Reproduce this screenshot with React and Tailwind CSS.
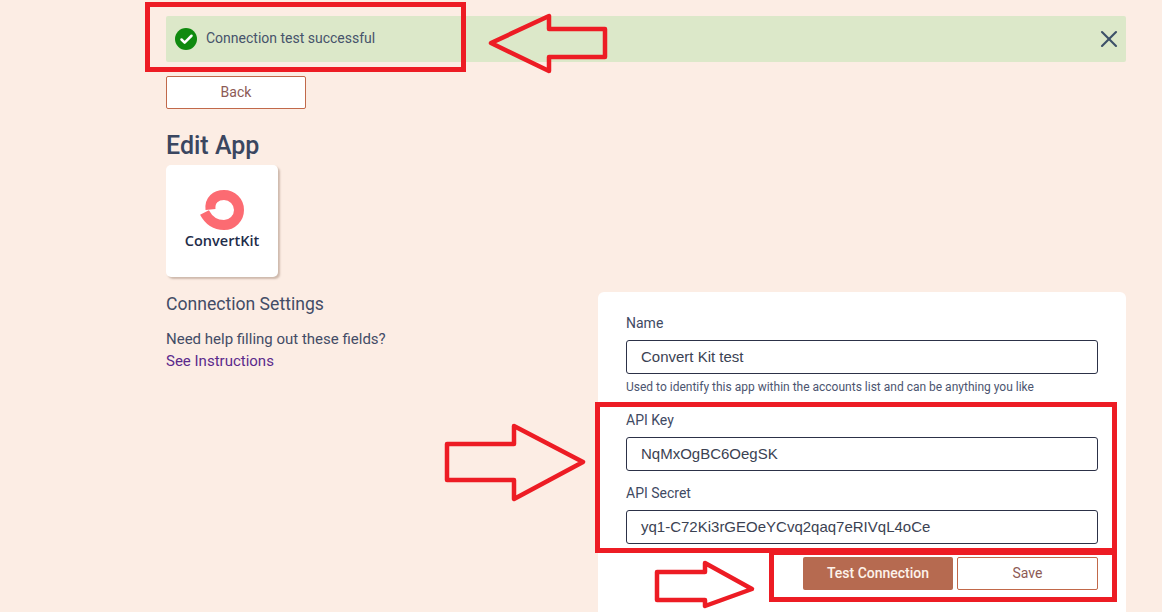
import { X, Check } from "lucide-react";

const Field = ({ label, value, className = "" }) => (
  <div className={className}>
    <label className="block text-[14px] leading-[20px] text-[#3f4a63]">{label}</label>
    <div className="mt-[7px] h-[34px] rounded-[3px] border border-[#2c3147] px-[14px] font-['Liberation_Sans',sans-serif] text-[15px] leading-[32px] text-[#3b4252]">
      {value}
    </div>
  </div>
);

const Arrow = ({ points }) => (
  <svg className="absolute top-0 left-0 pointer-events-none" width="1162" height="612">
    <polygon points={points} fill="none" stroke="#ed1c24" strokeWidth="4.5" strokeLinejoin="round" />
  </svg>
);

const App = () => {
  return (
    <div className="relative h-[612px] w-[1162px] overflow-hidden bg-[#fcede4] font-['Roboto',sans-serif]">
      <div className="ml-[166px] w-[960px] pt-[16px]">
        <div className="flex h-[46px] items-center rounded-[2px] bg-[#dce8c9] pl-[9px] pr-[3px]">
          <span className="flex h-[22px] w-[22px] items-center justify-center rounded-full bg-[#0f8a0f]">
            <Check size={15} strokeWidth={4} className="text-white" />
          </span>
          <span className="ml-[9px] pb-[2px] text-[14px] text-[#46536b]">Connection test successful</span>
          <X size={28} strokeWidth={1.8} className="ml-auto text-[#3d5068]" />
        </div>

        <button className="mt-[14px] block h-[33px] w-[140px] rounded-[2px] border border-[#c1694a] bg-white text-[14px] text-[#8d5a55]">
          Back
        </button>

        <h1 className="mt-[22px] text-[25px] leading-[30px] font-medium text-[#3a4660]">Edit App</h1>

        <div className="mt-[4px] flex h-[112px] w-[112px] flex-col items-center rounded-[5px] bg-white pt-[25px] shadow-[2px_2px_2px_rgba(120,90,70,0.35)]">
          <svg width="46" height="42" viewBox="0 0 46 42" className="ml-[2px]">
            <path
              d="M 10.5 19.5 C 9.5 10 16 5 24 5 A 15 15 0 0 1 24 35 C 15 35 9 31 4.5 22.5"
              fill="none"
              stroke="#fc6b72"
              strokeWidth="10"
              strokeLinecap="butt"
            />
          </svg>
          <span className="font-['Open_Sans',sans-serif] text-[14.5px] leading-[18px] font-semibold text-[#1f2d4a]">
            ConvertKit
          </span>
        </div>

        <div className="mt-[15px] flex items-start justify-between">
          <div>
            <h2 className="text-[17.6px] leading-[24px] text-[#434c66]">Connection Settings</h2>
            <p className="mt-[12px] text-[15px] leading-[22px] text-[#434c66]">
              Need help filling out these fields?
              <br />
              <a className="text-[#5b2a8c]">See Instructions</a>
            </p>
          </div>

          <div className="h-[340px] w-[528px] rounded-[6px] bg-white px-[28px] pt-[21px]">
            <Field label="Name" value="Convert Kit test" />
            <p className="mt-[5px] text-[12px] leading-[16px] text-[#4c5570]">
              Used to identify this app within the accounts list and can be anything you like
            </p>
            <Field label="API Key" value="NqMxOgBC6OegSK" className="mt-[15px]" />
            <Field label="API Secret" value="yq1-C72Ki3rGEOeYCvq2qaq7eRIVqL4oCe" className="mt-[12px]" />
            <div className="mt-[13px] flex justify-end gap-[4px]">
              <button className="h-[33px] w-[150px] rounded-[2px] bg-[#b66a50] text-[14px] font-medium text-[#fdf2ea]">
                Test Connection
              </button>
              <button className="h-[33px] w-[141px] rounded-[2px] border border-[#c1694a] bg-white text-[14px] text-[#8d5a55]">
                Save
              </button>
            </div>
          </div>
        </div>
      </div>

      {/* annotations drawn on top of the screenshot */}
      <div className="absolute top-[2px] left-[145px] h-[70px] w-[321px] border-[5px] border-[#ed1c24]" />
      <div className="absolute top-[402px] left-[595px] h-[151px] w-[522px] border-[5px] border-[#ed1c24]" />
      <div className="absolute top-[550px] left-[769px] h-[52px] w-[348px] border-[5px] border-[#ed1c24]" />
      <Arrow points="491,43 549,16 549,29 605,29 605,57 549,57 549,71" />
      <Arrow points="447,444 514,444 514,426 583,462 514,499 514,480 447,480" />
      <Arrow points="657,572 705,572 705,563 752,589 705,606 705,600 657,600" />
    </div>
  );
};

export default App;
